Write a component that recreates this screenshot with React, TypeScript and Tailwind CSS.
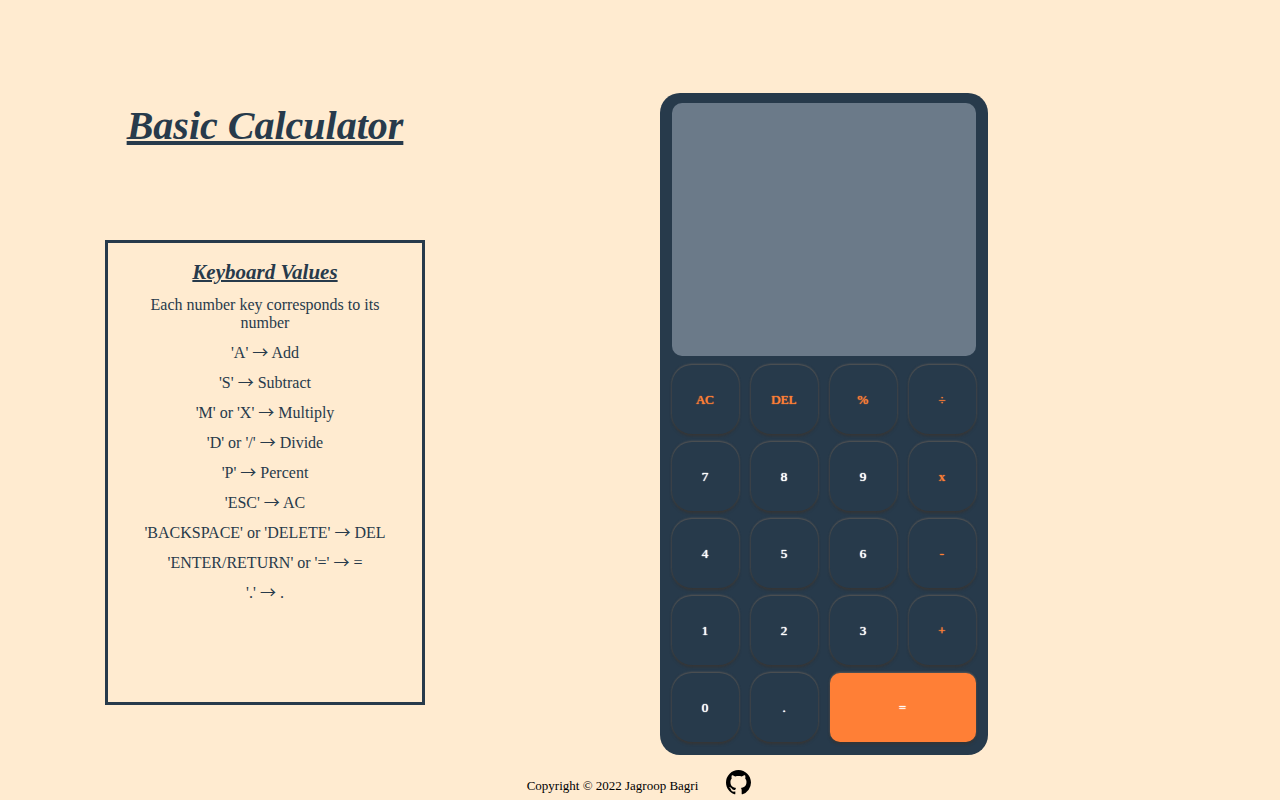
import { useState } from "react";
import { VscGithubInverted } from "react-icons/vsc";

type Key = { label: string; kind: "number" | "operator" | "equals" };

const num = (label: string): Key => ({ label, kind: "number" });
const op = (label: string): Key => ({ label, kind: "operator" });

const keys: Key[] = [
  op("AC"), op("DEL"), op("%"), op("÷"),
  num("7"), num("8"), num("9"), op("x"),
  num("4"), num("5"), num("6"), op("-"),
  num("1"), num("2"), num("3"), op("+"),
  num("0"), num("."), { label: "=", kind: "equals" },
];

const shortcuts = [
  ["'A'", "Add"],
  ["'S'", "Subtract"],
  ["'M' or 'X'", "Multiply"],
  ["'D' or '/'", "Divide"],
  ["'P'", "Percent"],
  ["'ESC'", "AC"],
  ["'BACKSPACE' or 'DELETE'", "DEL"],
  ["'ENTER/RETURN' or '='", "="],
  ["'.'", "."],
];

const keyStyle = {
  number: "rounded-[20px] bg-[#273a4b] text-white",
  operator: "rounded-[20px] bg-[#273a4b] text-[#ff7f36]",
  equals: "col-span-2 rounded-[10px] bg-[#ff7f36] text-white",
};

function evaluate(text: string): string {
  const tokens = text.match(/\d*\.?\d+|[÷x+\-%]/g) ?? [];
  let total = Number(tokens[0] ?? 0);
  for (let i = 1; i < tokens.length; i += 2) {
    const value = Number(tokens[i + 1]);
    if (tokens[i] === "%") {
      total /= 100;
      i -= 1;
    } else if (tokens[i] === "÷") total /= value;
    else if (tokens[i] === "x") total *= value;
    else if (tokens[i] === "+") total += value;
    else total -= value;
  }
  return Number.isFinite(total) ? String(total) : "";
}

function Calculator() {
  const [entry, setEntry] = useState("");

  const press = (label: string) => {
    if (label === "AC") setEntry("");
    else if (label === "DEL") setEntry(entry.slice(0, -1));
    else if (label === "=") setEntry(evaluate(entry));
    else setEntry(entry + label);
  };

  return (
    <section className="w-[328px] rounded-[20px] bg-[#273a4b] px-3 pt-[10px] pb-[13px]">
      <output className="flex h-[253px] items-end justify-end overflow-hidden rounded-[10px] bg-[#6b7a89] p-4 text-3xl text-white">
        {entry}
      </output>
      <div className="mt-[9px] grid grid-cols-4 gap-x-3 gap-y-2">
        {keys.map(({ label, kind }) => (
          <button
            key={label}
            type="button"
            onClick={() => press(label)}
            className={`h-[69px] cursor-pointer pt-px pr-px text-[13px] shadow-[0_2px_3px_#333,0_-1px_2px_#555,0_0_2px_#666] [text-shadow:0_0_1px_currentColor,0_0_1px_currentColor] ${keyStyle[kind]}`}
          >
            {label}
          </button>
        ))}
      </div>
    </section>
  );
}

export default function App() {
  return (
    <div className="flex min-h-screen flex-col bg-[#ffebd0] font-['Liberation_Serif',serif] text-[#273a4b]">
      <main className="grid grow grid-cols-[530px_1fr] pt-[93px]">
        <div className="flex flex-col items-center">
          <h1 className="mt-[9px] text-[40px] leading-[48px] font-bold italic underline decoration-4">Basic Calculator</h1>
          <section className="mt-[90px] h-[465px] w-80 border-3 px-6 pt-[17px] text-center">
            <h2 className="text-[21px] leading-6 font-bold italic underline decoration-2">Keyboard Values</h2>
            <ul className="mt-3 flex flex-col gap-3 leading-[18px]">
              <li>Each number key corresponds to its number</li>
              {shortcuts.map(([key, action]) => (
                <li key={key}>
                  {key} <span className="font-['Noto_Sans_CJK_JP',sans-serif] leading-[0]">→</span> {action}
                </li>
              ))}
            </ul>
          </section>
        </div>
        <div className="pl-[130px]">
          <Calculator />
        </div>
      </main>
      <footer className="flex items-center justify-center gap-7 pt-[14px] pb-[5px] pr-[2px] text-black">
        <p className="pt-[7px] text-[13px] leading-4">Copyright © 2022 Jagroop Bagri</p>
        <a href="https://github.com" aria-label="GitHub">
          <VscGithubInverted size={25} />
        </a>
      </footer>
    </div>
  );
}
